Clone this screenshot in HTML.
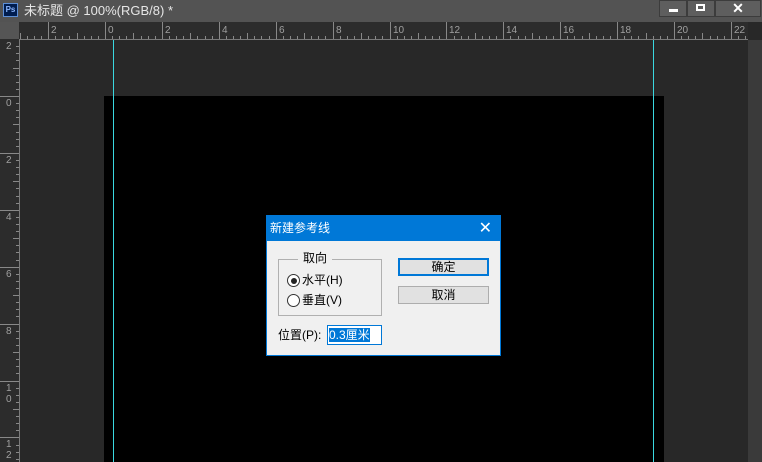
<!DOCTYPE html>
<html><head><meta charset="utf-8"><style>
body{margin:0;width:762px;height:462px;overflow:hidden;background:#282828;position:relative;font-family:"Liberation Sans","Noto Sans CJK SC",sans-serif}
.abs{position:absolute}
</style></head><body>
<div class="abs" style="left:0;top:0;width:762px;height:22px;background:#535353"></div>
<div class="abs" style="left:3px;top:3px;width:15px;height:14px;background:#001d4f;border:1px solid #5d8fd6;box-sizing:border-box;color:#8cb7ff;font-size:8px;line-height:12px;text-align:center;font-weight:bold">Ps</div>
<div class="abs" style="left:24px;top:1px;color:#e6e6e6;font-size:13px;line-height:20px">未标题 @ 100%(RGB/8) *</div>
<div class="abs" style="left:659px;top:0;width:28px;height:17px;background:#5e5e5e;border:1px solid #3c3c3c;box-sizing:border-box"><div class="abs" style="left:9px;top:8px;width:9px;height:3px;background:#fff"></div></div>
<div class="abs" style="left:687px;top:0;width:28px;height:17px;background:#5e5e5e;border:1px solid #3c3c3c;box-sizing:border-box"><div class="abs" style="left:8px;top:3px;width:9px;height:7px;border:2px solid #fff;box-sizing:border-box"></div></div>
<div class="abs" style="left:715px;top:0;width:46px;height:17px;background:#5e5e5e;border:1px solid #3c3c3c;box-sizing:border-box;color:#fff;font-size:14px;font-weight:bold;text-align:center;line-height:15px">✕</div>
<div class="abs" style="left:748px;top:40px;width:14px;height:422px;background:#3a3a3a"></div>
<div class="abs" style="left:104px;top:96px;width:560px;height:366px;background:#000"></div>
<svg class="abs" style="left:0;top:0" width="762" height="462" id="r"></svg>
<div class="abs" style="left:113px;top:40px;width:1px;height:422px;background:#3ad8e0"></div>
<div class="abs" style="left:653px;top:40px;width:1px;height:422px;background:#3ad8e0"></div>

<div class="abs" style="left:266px;top:215px;width:235px;height:141px;background:#f0f0f0;border:1px solid #0078d7;box-sizing:border-box;font-size:12px;color:#000">
 <div class="abs" style="left:0;top:0;width:233px;height:25px;background:#0078d7;color:#fff;font-size:12px;line-height:25px;padding-left:3px;box-sizing:border-box">新建参考线<span style="position:absolute;right:8px;top:0;font-size:16px">✕</span></div>
 <div class="abs" style="left:11px;top:43px;width:104px;height:57px;border:1px solid #b0b0b0;box-sizing:border-box"></div>
 <div class="abs" style="left:31px;top:34px;background:#f0f0f0;padding:0 5px;line-height:16px">取向</div>
 <div class="abs" style="left:20px;top:58px;width:13px;height:13px;border:1px solid #333;border-radius:50%;box-sizing:border-box;background:#fff"><div class="abs" style="left:2.5px;top:2.5px;width:6px;height:6px;border-radius:50%;background:#222"></div></div>
 <div class="abs" style="left:35px;top:56px;line-height:16px">水平(H)</div>
 <div class="abs" style="left:20px;top:78px;width:13px;height:13px;border:1px solid #333;border-radius:50%;box-sizing:border-box;background:#fff"></div>
 <div class="abs" style="left:35px;top:76px;line-height:16px">垂直(V)</div>
 <div class="abs" style="left:131px;top:42px;width:91px;height:18px;background:#e1e1e1;border:2px solid #0078d7;box-sizing:border-box;text-align:center;line-height:14px">确定</div>
 <div class="abs" style="left:131px;top:70px;width:91px;height:18px;background:#e1e1e1;border:1px solid #adadad;box-sizing:border-box;text-align:center;line-height:16px">取消</div>
 <div class="abs" style="left:11px;top:111px;line-height:16px">位置(P):</div>
 <div class="abs" style="left:60px;top:109px;width:55px;height:20px;background:#fff;border:1px solid #0078d7;box-sizing:border-box"><span style="position:absolute;left:1px;top:2px;background:#0078d7;color:#fff;line-height:14px">0.3厘米</span></div>
</div>
<script>
var s='';
s+='<rect x="0" y="22" width="748" height="18" fill="#2c2c2c"/><rect x="0" y="22" width="19" height="440" fill="#2c2c2c"/>';
s+='<rect x="0" y="22" width="19" height="17" fill="#555"/>';
s+='<line x1="19" y1="39.5" x2="748" y2="39.5" stroke="#7a7a7a" stroke-width="1"/><line x1="19.5" y1="40" x2="19.5" y2="462" stroke="#7a7a7a"/>';
var d=56.9,x0=105-2*d;
for(var i=0;i<14;i++){var x=x0+i*d;for(var k=0;k<8;k++){var xx=Math.round(x+k*d/8)+.5;if(xx<20||xx>746)continue;var h=k==0?17:(k==4?6:3);s+='<line x1="'+xx+'" y1="'+(39-h)+'" x2="'+xx+'" y2="39" stroke="#888"/>';}
var lab=Math.abs(2*i-4);s+='<text x="'+(Math.round(x)+3)+'" y="33" fill="#a0a0a0" font-size="10" font-family="Liberation Sans">'+lab+'</text>';}
var y0=96-d;
for(var i=0;i<8;i++){var y=y0+i*d;for(var k=0;k<8;k++){var yy=Math.round(y+k*d/8)+.5;if(yy<40)continue;var w=k==0?19:(k==4?6:3);s+='<line x1="'+(19-w)+'" y1="'+yy+'" x2="19" y2="'+yy+'" stroke="#888"/>';}
var lab=String(Math.abs(2*i-2));for(var c=0;c<lab.length;c++){var ty=Math.round(y)+10+c*11;if(ty>40)s+='<text x="6" y="'+ty+'" fill="#a0a0a0" font-size="10" font-family="Liberation Sans">'+lab[c]+'</text>';}}
document.getElementById('r').innerHTML=s;
</script>
</body></html>
